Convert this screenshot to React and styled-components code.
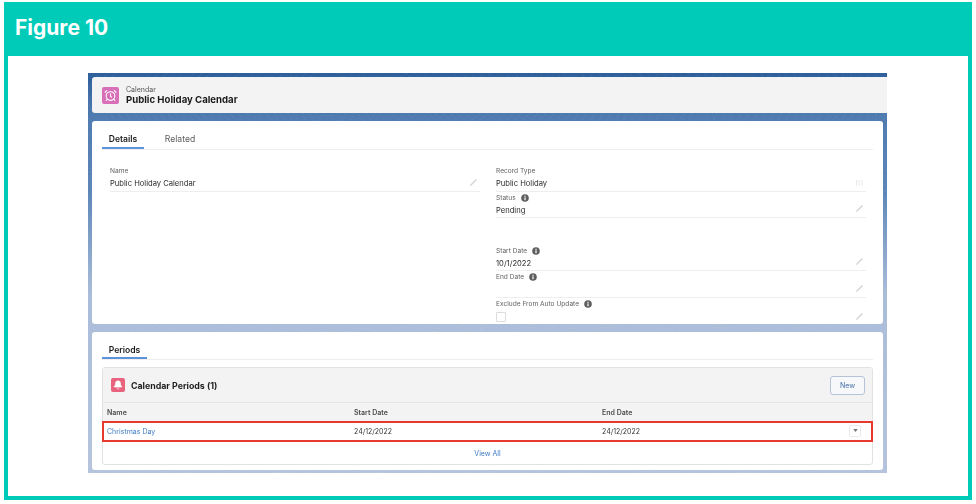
import React from 'react'
import styled, { createGlobalStyle } from 'styled-components'
import { AlarmClock, Bell } from 'lucide-react'

const Global = createGlobalStyle`
  html, body { margin: 0; padding: 0; background: #fff; }
  body { font-family: Inter, "Liberation Sans", sans-serif; }
`

const Frame = styled.div`
  box-sizing: border-box;
  width: 968px;
  height: 498px;
  margin: 2px 4px 0;
  border: 4px solid #00cbb8;
  border-top: 0;
  display: flex;
  flex-direction: column;
`
const FigureBar = styled.header`
  height: 54px;
  margin: 0 -4px;
  padding-left: 11px;
  background: #00cbb8;
  color: #fff;
  font-size: 21px;
  font-weight: 700;
  line-height: 51px;
`
const Shot = styled.div`
  box-sizing: border-box;
  width: 799px;
  height: 400px;
  margin: 17px 0 0 80px;
  padding: 4px 0 0 4px;
  display: flex;
  flex-direction: column;
  gap: 8px;
  filter: blur(0.4px);
  background:
    repeating-radial-gradient(ellipse 90px 30px at 30% 6%, transparent 0 7px, rgba(255, 255, 255, 0.035) 7px 8px),
    repeating-radial-gradient(ellipse 110px 24px at 72% 8%, transparent 0 6px, rgba(255, 255, 255, 0.03) 6px 7px),
    linear-gradient(180deg, #2d5e9a 0, #4f7bb0 11%, #5d86b8 30%, #a9bcd8 55%, #b5c4dc 100%);
`
const RecordHeader = styled.div`
  height: 36px;
  display: flex;
  align-items: center;
  gap: 7px;
  padding-left: 10px;
  background: #f3f3f3;
  border-radius: 3px 0 0 3px;
`
const IconTile = styled.span`
  width: ${p => p.$size}px;
  height: ${p => p.$size}px;
  flex: none;
  display: flex;
  align-items: center;
  justify-content: center;
  border-radius: 2px;
  background: ${p => p.$color};
  color: #fff;
`
const HeaderText = styled.div`
  display: flex;
  flex-direction: column;
`
const ObjectName = styled.span`
  font-size: 7px;
  line-height: 9px;
  color: #555;
`
const RecordTitle = styled.span`
  font-size: 9.6px;
  line-height: 12px;
  font-weight: 700;
  color: #1a1a1a;
`
const Card = styled.section`
  box-sizing: border-box;
  width: 791px;
  height: ${p => p.$height}px;
  padding: 0 10px;
  background: #fff;
  border-radius: 3px;
`
const Tabs = styled.div`
  height: ${p => p.$height}px;
  display: flex;
  gap: 20px;
  border-bottom: 1px solid #eeeeee;
  box-sizing: border-box;
`
const Tab = styled.div`
  width: ${p => p.$width}px;
  height: 100%;
  box-sizing: border-box;
  text-align: center;
  font-size: 8.6px;
  line-height: 10px;
  padding-top: 13px;
  font-weight: ${p => (p.$active ? 600 : 400)};
  color: ${p => (p.$active ? '#1a1a1a' : '#5c5c5c')};
  border-bottom: ${p => (p.$active ? '2px solid #5c93dc' : '0')};
`
const FieldGrid = styled.div`
  display: grid;
  grid-template-columns: 370px 370px;
  column-gap: 16px;
  margin: 15px 0 0 8px;
`
const Column = styled.div`
  display: flex;
  flex-direction: column;
`
const Field = styled.div`
  position: relative;
  box-sizing: border-box;
  height: 26.6px;
  padding-top: 1.5px;
  border-bottom: ${p => (p.$plain ? '0' : '1px solid #eeeeee')};
`
const Label = styled.div`
  display: flex;
  align-items: center;
  gap: 5px;
  height: 9px;
  font-size: 6.6px;
  color: #5f5f5f;
`
const Value = styled.div`
  margin-top: 2.5px;
  height: 11px;
  font-size: 7.6px;
  line-height: 11px;
  color: #2b2b2b;
`
const FieldIcon = styled.span`
  position: absolute;
  right: 2px;
  bottom: 4px;
  display: flex;
  color: #d4d4d4;
`
const Checkbox = styled.span`
  display: block;
  box-sizing: border-box;
  width: 10px;
  height: 10px;
  margin-top: 4px;
  border: 1px solid #dcdcdc;
  border-radius: 1px;
`
const TableBox = styled.div`
  margin-top: 7px;
  height: 98px;
  box-sizing: border-box;
  width: 771px;
  display: flex;
  flex-direction: column;
  border: 1px solid #e2e2e2;
  border-radius: 3px;
`
const TableHeader = styled.div`
  height: 35px;
  flex: none;
  box-sizing: border-box;
  display: flex;
  align-items: center;
  padding: 0 7px 0 8px;
  background: #f3f3f3;
  border-bottom: 1px solid #e6e6e6;
`
const TableTitle = styled.h2`
  margin: 0 0 0 6px;
  flex: 1;
  font-size: 8.8px;
  font-weight: 700;
  color: #1f1f1f;
`
const NewButton = styled.button`
  width: 35px;
  height: 19px;
  padding: 0;
  font: 500 7px Inter, sans-serif;
  color: #5b82b3;
  background: #f7f8f9;
  border: 1px solid #b5c3d6;
  border-radius: 3px;
`
const Row = styled.div`
  display: grid;
  grid-template-columns: 247px 248px 1fr;
  align-items: center;
  box-sizing: border-box;
  flex: none;
`
const HeadRow = styled(Row)`
  height: 18px;
  padding-left: 4px;
  background: #f3f3f3;
  font-size: 7px;
  font-weight: 600;
  color: #4c4c4c;
`
const DataRow = styled(Row)`
  position: relative;
  height: 21px;
  margin: 0 -1px;
  padding-left: 3px;
  border: 2.5px solid #e8392f;
  font-size: 7px;
  color: #333;
`
const NameLink = styled.a`
  color: #3f7cc4;
`
const RowMenu = styled.span`
  position: absolute;
  right: 10px;
  top: 1.5px;
  width: 12px;
  height: 12px;
  box-sizing: border-box;
  display: flex;
  align-items: center;
  justify-content: center;
  border: 1px solid #ebebeb;
  border-radius: 2px;
`
const ViewAll = styled.div`
  flex: 1;
  display: flex;
  align-items: center;
  justify-content: center;
  font-size: 7px;
  color: #3f7cc4;
`

const InfoIcon = () => (
  <svg width="8" height="8" viewBox="0 0 8 8">
    <circle cx="4" cy="4" r="3.8" fill="#5e5e5e" />
    <rect x="3.4" y="3.3" width="1.2" height="2.9" fill="#fff" />
    <rect x="3.4" y="1.7" width="1.2" height="1.1" fill="#fff" />
  </svg>
)

const PencilIcon = () => (
  <svg width="9" height="9" viewBox="0 0 9 9">
    <path d="M1 8 L1.4 6.6 L7 1 L8 2 L2.4 7.6 Z" fill="currentColor" />
  </svg>
)

const LockIcon = () => (
  <svg width="9" height="9" viewBox="0 0 9 9" fill="none" stroke="#e8e8e8" strokeWidth="1">
    <path d="M1.5 2v5.5M4 2v5.5M7 1.5v6" />
  </svg>
)

const fieldsRight = [
  { label: 'Record Type', value: 'Public Holiday', locked: true },
  { label: 'Status', value: 'Pending', info: true },
  { blank: true },
  { label: 'Start Date', value: '10/1/2022', info: true },
  { label: 'End Date', value: '', info: true },
  { label: 'Exclude From Auto Update', info: true, check: true },
]

const DetailField = ({ label, value, info, locked, check, blank }) => {
  if (blank) return <Field $plain />
  return (
    <Field $plain={check}>
      <Label>
        {label}
        {info && <InfoIcon />}
      </Label>
      {check ? <Checkbox /> : <Value>{value}</Value>}
      <FieldIcon>{locked ? <LockIcon /> : <PencilIcon />}</FieldIcon>
    </Field>
  )
}

export default function App() {
  return (
    <>
      <Global />
      <Frame>
        <FigureBar>Figure 10</FigureBar>
        <Shot>
          <RecordHeader>
            <IconTile $size={17} $color="#d96fb8">
              <AlarmClock size={13} strokeWidth={2} />
            </IconTile>
            <HeaderText>
              <ObjectName>Calendar</ObjectName>
              <RecordTitle>Public Holiday Calendar</RecordTitle>
            </HeaderText>
          </RecordHeader>

          <Card $height={203}>
            <Tabs $height={29}>
              <Tab $active $width={42}>Details</Tab>
              <Tab $width={32}>Related</Tab>
            </Tabs>
            <FieldGrid>
              <Column>
                <DetailField label="Name" value="Public Holiday Calendar" />
              </Column>
              <Column>
                {fieldsRight.map((f, i) => (
                  <DetailField key={i} {...f} />
                ))}
              </Column>
            </FieldGrid>
          </Card>

          <Card $height={138}>
            <Tabs $height={28}>
              <Tab $active $width={45}>Periods</Tab>
            </Tabs>
            <TableBox>
              <TableHeader>
                <IconTile $size={14} $color="#e9637e">
                  <Bell size={10} fill="#fff" strokeWidth={1.5} />
                </IconTile>
                <TableTitle>Calendar Periods (1)</TableTitle>
                <NewButton>New</NewButton>
              </TableHeader>
              <HeadRow>
                <span>Name</span>
                <span>Start Date</span>
                <span>End Date</span>
              </HeadRow>
              <DataRow>
                <NameLink>Christmas Day</NameLink>
                <span>24/12/2022</span>
                <span>24/12/2022</span>
                <RowMenu>
                  <svg width="5" height="3" viewBox="0 0 6 4">
                    <path d="M0 0h6L3 4z" fill="#777" />
                  </svg>
                </RowMenu>
              </DataRow>
              <ViewAll>View All</ViewAll>
            </TableBox>
          </Card>
        </Shot>
      </Frame>
    </>
  )
}
